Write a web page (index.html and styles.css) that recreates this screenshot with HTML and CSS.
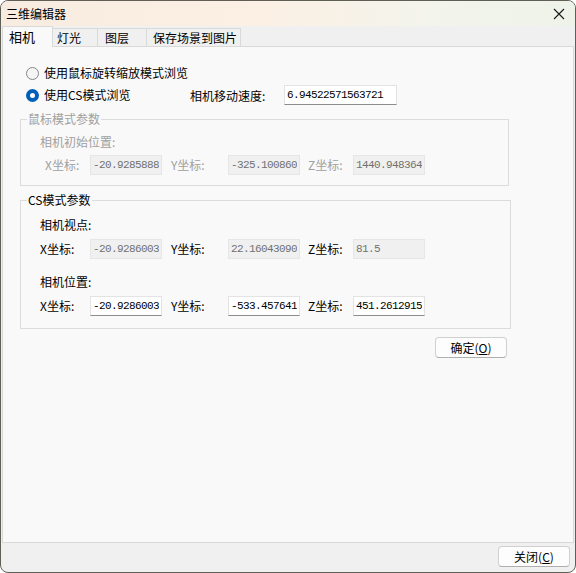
FILE: index.html
```html
<!DOCTYPE html>
<html lang="zh-CN">
<head>
    <meta charset="UTF-8">
    <title>三维编辑器</title>
    <link rel="stylesheet" href="styles.css">
</head>
<body>
    <div class="jendela">
        <!-- Title bar -->
        <div class="judul">
            <span class="judul-teks">三维编辑器</span>
            <svg class="tutup" width="12" height="12" viewBox="0 0 12 12">
                <path d="M1 1 L11 11 M11 1 L1 11" stroke="#1a1a1a" stroke-width="1.1" fill="none"/>
            </svg>
        </div>

        <!-- Tabs -->
        <div class="tab-bar">
            <div class="tab aktif">相机</div>
            <div class="tab t2">灯光</div>
            <div class="tab t3">图层</div>
            <div class="tab t4">保存场景到图片</div>
        </div>

        <!-- Tab content -->
        <div class="panel">
            <div class="radio-baris">
                <span class="radio"></span>
                <span class="radio-teks">使用鼠标旋转缩放模式浏览</span>
            </div>
            <div class="radio-baris">
                <span class="radio dipilih"></span>
                <span class="radio-teks lebar">使用CS模式浏览</span>
                <span class="label-kecepatan">相机移动速度:</span>
                <input class="isian kecepatan" type="text" value="6.94522571563721">
            </div>

            <fieldset class="grup grup1 mati">
                <legend>鼠标模式参数</legend>
                <div class="sub">相机初始位置:</div>
                <div class="koordinat">
                    <span class="lbl geser">X坐标:</span>
                    <input class="isian" type="text" value="-20.92858880" disabled>
                    <span class="lbl y">Y坐标:</span>
                    <input class="isian" type="text" value="-325.1008609" disabled>
                    <span class="lbl z">Z坐标:</span>
                    <input class="isian" type="text" value="1440.9483642" disabled>
                </div>
            </fieldset>

            <fieldset class="grup grup2">
                <legend>CS模式参数</legend>
                <div class="sub">相机视点:</div>
                <div class="koordinat">
                    <span class="lbl">X坐标:</span>
                    <input class="isian" type="text" value="-20.9286003" disabled>
                    <span class="lbl y">Y坐标:</span>
                    <input class="isian" type="text" value="22.16043090" disabled>
                    <span class="lbl z">Z坐标:</span>
                    <input class="isian" type="text" value="81.5" disabled>
                </div>
                <div class="sub jarak">相机位置:</div>
                <div class="koordinat">
                    <span class="lbl">X坐标:</span>
                    <input class="isian" type="text" value="-20.9286003">
                    <span class="lbl y">Y坐标:</span>
                    <input class="isian" type="text" value="-533.4576410">
                    <span class="lbl z">Z坐标:</span>
                    <input class="isian" type="text" value="451.26129150">
                </div>
            </fieldset>

            <div class="baris-ok">
                <button class="tombol">确定(<u>O</u>)</button>
            </div>
        </div>

        <!-- Bottom bar -->
        <div class="bawah">
            <button class="tombol">关闭(<u>C</u>)</button>
        </div>
    </div>
</body>
</html>
```

FILE: styles.css
```css
/* --- window frame --- */
html, body {
    margin: 0;
    padding: 0;
    background: #ffffff;
}

body {
    font-family: "Noto Sans CJK SC", "Noto Sans", sans-serif;
    font-size: 12px;
    color: #000;
}

.jendela {
    width: 576px;
    height: 573px;
    box-sizing: border-box;
    border: 1px solid #5f5f55;
    border-radius: 8px;
    overflow: hidden;
    display: flex;
    flex-direction: column;
    background: #f0f0f0;
}

.judul {
    height: 25px;
    flex: none;
    display: flex;
    align-items: center;
    justify-content: space-between;
    padding: 0 10px 0 5px;
    background: linear-gradient(90deg, #f8ebdf 0%, #fcf0e4 45%, #f3f4ec 75%, #eef3ea 100%);
}

.judul-teks {
    font-size: 12px;
    line-height: 16px;
}

.tutup {
    display: block;
}

/* --- tabs --- */
.tab-bar {
    height: 20px;
    flex: none;
    display: flex;
    align-items: flex-end;
    padding-left: 1px;
    position: relative;
    z-index: 1;
}

.tab {
    height: 18px;
    box-sizing: border-box;
    border: 1px solid #d9d9d9;
    border-bottom: none;
    border-left: none;
    line-height: 17px;
    font-size: 12px;
    background: #f0f0f0;
}

.tab.aktif {
    width: 51px;
    height: 21px;
    margin-bottom: -1px;
    border-left: 1px solid #d9d9d9;
    background: #f9f9f9;
    padding-left: 6px;
    font-size: 13px;
    line-height: 20px;
}

.tab.t2 { width: 45px; padding-left: 4px; }
.tab.t3 { width: 49px; padding-left: 7px; }
.tab.t4 { width: 94px; padding-left: 6px; }

/* --- panel --- */
.panel {
    flex: 1;
    margin: 0 1px;
    border: 1px solid #d9d9d9;
    background: #f9f9f9;
    padding: 15px 0 0 17px;
}

.radio-baris {
    height: 22px;
    display: flex;
    align-items: center;
    margin-left: 6px;
}

.radio {
    width: 13px;
    height: 13px;
    box-sizing: border-box;
    border: 1px solid #858585;
    border-radius: 50%;
    background: #f5f5f5;
    margin-right: 5px;
    flex: none;
}

.radio.dipilih {
    border: 4px solid #005fb8;
    background: #ffffff;
}

.radio-teks {
    line-height: 16px;
}

.radio-teks.lebar {
    width: 146px;
}

.label-kecepatan {
    width: 94px;
}

.isian {
    width: 72px;
    height: 20px;
    box-sizing: border-box;
    border: 1px solid #e3e3e3;
    border-bottom-color: #8c8c8c;
    background: #ffffff;
    padding: 0 2px;
    margin: 0;
    font-family: "Liberation Mono", monospace;
    font-size: 11px;
    letter-spacing: -0.6px;
    color: #000;
    outline: none;
}

.isian:disabled {
    background: #f0f0f0;
    border-color: #e6e6e6;
    color: #707070;
}

.isian.kecepatan {
    width: 113px;
}

/* --- group boxes --- */
.grup {
    margin: 6px 0 0 0;
    padding: 0 0 10px 19px;
    border: 1px solid #dcdcdc;
    min-width: 0;
    box-sizing: border-box;
}

.grup legend {
    padding: 0 1px;
    margin-left: -13px;
    line-height: 14px;
}

.grup1 {
    width: 489px;
}

.grup2 {
    width: 491px;
    margin-top: 7px;
    padding-bottom: 12px;
}

.mati,
.mati legend {
    color: #a0a0a0;
}

.sub {
    line-height: 16px;
    margin-top: 8px;
}

.grup2 .sub {
    margin-top: 10px;
}

.grup2 .sub.jarak {
    margin-top: 15px;
}

.koordinat {
    display: grid;
    grid-template-columns: 50px 72px 66px 72px 53px 72px;
    align-items: center;
    margin-top: 5px;
}

.grup2 .koordinat {
    margin-top: 6px;
}

.lbl {
    line-height: 16px;
}

.lbl.geser { padding-left: 5px; }
.lbl.y { padding-left: 9px; }
.lbl.z { padding-left: 8px; }

/* --- buttons --- */
.baris-ok {
    width: 487px;
    display: flex;
    justify-content: flex-end;
    margin-top: 8px;
}

.tombol {
    width: 72px;
    height: 21px;
    box-sizing: border-box;
    border: 1px solid #d0d0d0;
    border-bottom-color: #aeaeae;
    border-radius: 4px;
    background: #fdfdfd;
    font-family: "Noto Sans CJK SC", "Noto Sans", sans-serif;
    font-size: 12px;
    line-height: 18px;
    padding: 0;
    color: #000;
}

.tombol u {
    text-underline-offset: 1px;
}

.bawah {
    height: 29px;
    flex: none;
    display: flex;
    justify-content: flex-end;
    align-items: flex-start;
    padding: 3px 5px 0 0;
    box-sizing: border-box;
}
```
